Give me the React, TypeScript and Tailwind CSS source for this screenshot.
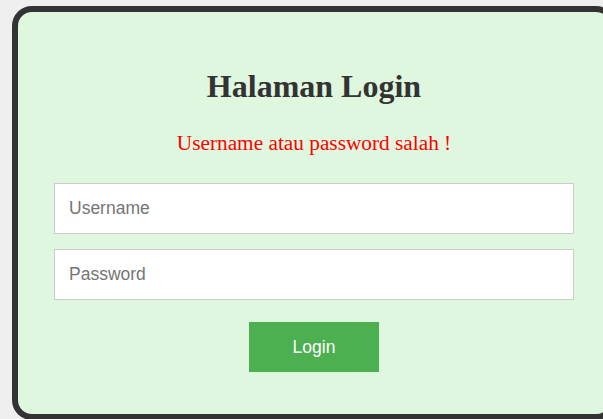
import { useState, type FormEvent } from "react";

// ── Component ────────────────────────────────────────────

export default function App() {
  const [username, setUsername] = useState("");
  const [password, setPassword] = useState("");

  const handleSubmit = (e: FormEvent) => {
    e.preventDefault();
  };

  return (
    <div className="h-[419px] w-[603px] overflow-hidden bg-[#efefef] pl-[12px] pt-[6px]">
      {/* Login card */}
      <div className="flex h-[414px] w-[604px] flex-col items-center rounded-[20px] border-[6px] border-[#333333] bg-[#dff7df] px-[36px]">
        <h1 className="mt-[56px] text-[32px] font-bold leading-[36px] text-[#333333] [font-family:'Liberation_Serif',serif]">
          Halaman Login
        </h1>
        <p className="mt-[27px] text-[21.3px] leading-[24px] text-[#ff0000] [font-family:'Liberation_Serif',serif]">
          Username atau password salah !
        </p>

        <form
          onSubmit={handleSubmit}
          className="mt-[28px] flex w-full flex-col items-center [font-family:'Liberation_Sans',Arial,sans-serif]"
        >
          <input
            type="text"
            value={username}
            onChange={(e) => setUsername(e.target.value)}
            placeholder="Username"
            className="h-[51px] w-full border border-[#cccccc] bg-white px-[14px] text-[17.5px] text-[#333333] outline-none placeholder:text-[#757575]"
          />
          <input
            type="password"
            value={password}
            onChange={(e) => setPassword(e.target.value)}
            placeholder="Password"
            className="mt-[15px] h-[51px] w-full border border-[#cccccc] bg-white px-[14px] text-[17.5px] text-[#333333] outline-none placeholder:text-[#757575]"
          />
          <button
            type="submit"
            className="mt-[22px] h-[50px] w-[130px] bg-[#4caf50] text-[17.5px] text-white"
          >
            Login
          </button>
        </form>
      </div>
    </div>
  );
}
